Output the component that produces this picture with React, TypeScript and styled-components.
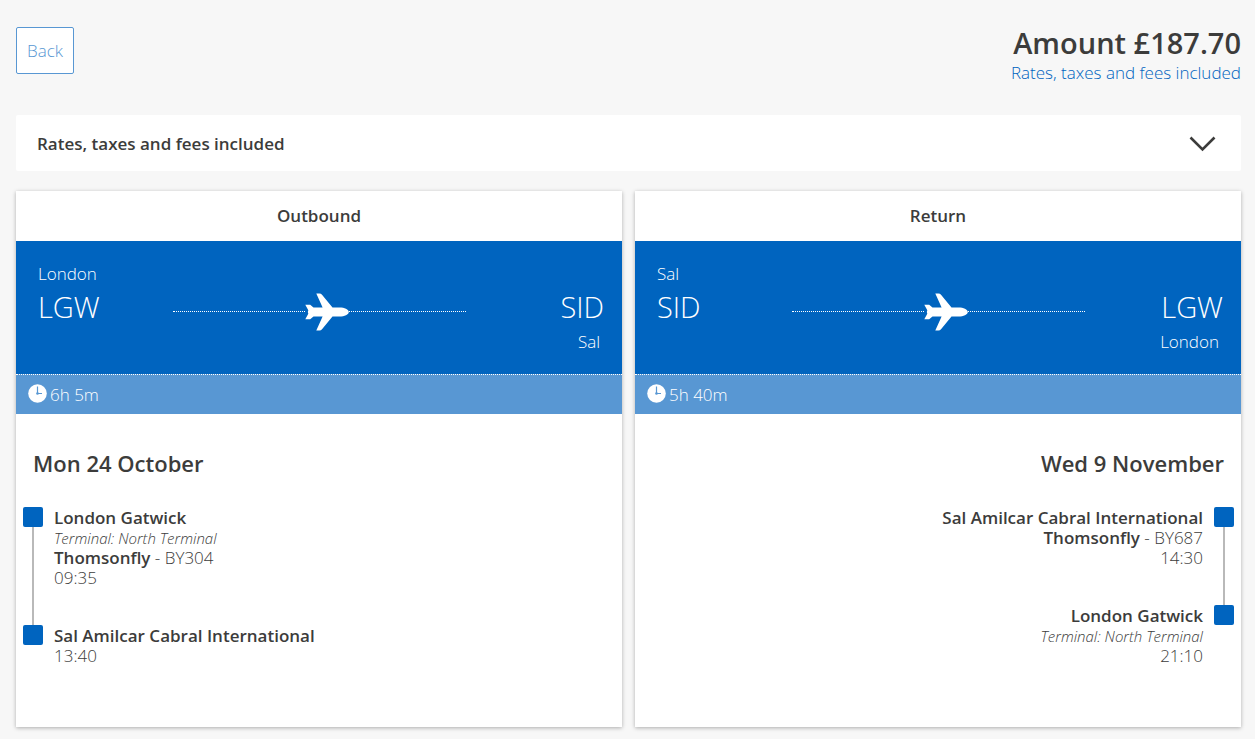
import React from "react";
import styled, { createGlobalStyle } from "styled-components";

const color = {
  page: "#f7f7f7",
  text: "#3c3c3b",
  blue: "#0064bf",
  lightBlue: "#5897d3",
  rail: "#b9b9b9",
};

const weight = { light: 340, strong: 600 };

const GlobalStyle = createGlobalStyle`
  *, *::before, *::after { box-sizing: border-box; }
  body {
    margin: 0;
    background: ${color.page};
    color: ${color.text};
    font-family: "Open Sans", "Noto Sans", sans-serif;
    font-size: 17px;
    font-weight: ${weight.light};
    line-height: 20px;
  }
  button { font: inherit; color: inherit; cursor: pointer; }
`;

const Page = styled.main`
  padding: 27px 14px 12px 16px;
`;

const Header = styled.header`
  display: flex;
  justify-content: space-between;
  align-items: flex-start;
  min-height: 88px;
`;

const BackButton = styled.button`
  height: 47px;
  padding: 0 10px;
  border: 1px solid ${color.lightBlue};
  border-radius: 2px;
  background: #fff;
  color: ${color.lightBlue};
`;

const Total = styled.div`
  text-align: right;
`;

const Amount = styled.h1`
  margin: 0 0 4px;
  font-size: 29px;
  font-weight: ${weight.strong};
  line-height: 32px;
`;

const RatesLink = styled.a`
  color: ${color.blue};
  text-decoration: none;
`;

const RatesToggle = styled.button`
  display: flex;
  justify-content: space-between;
  align-items: center;
  width: 100%;
  height: 56px;
  margin-bottom: 20px;
  padding: 2px 25px 0 21px;
  border: 0;
  border-radius: 2px;
  background: #fff;
  text-align: left;
`;

const Strong = styled.strong`
  font-weight: ${weight.strong};
`;

const Flights = styled.div`
  display: grid;
  grid-template-columns: 1fr 1fr;
  gap: 13px;
`;

const Card = styled.section`
  display: flex;
  flex-direction: column;
  background: #fff;
  box-shadow: 0 1px 4px rgba(0, 0, 0, 0.3);
`;

const CardTitle = styled.h2`
  margin: 0;
  font-size: 17px;
  font-weight: ${weight.strong};
  line-height: 50px;
  text-align: center;
`;

const Route = styled.div`
  display: grid;
  grid-template-columns: 135px 1fr 138px;
  padding: 16px 18px 15px 22px;
  background: ${color.blue};
  color: #fff;
`;

const Place = styled.div<{ $end?: boolean }>`
  display: flex;
  flex-direction: column;
  padding-top: ${(p) => (p.$end ? "34px" : "0")};
  padding-bottom: ${(p) => (p.$end ? "0" : "34px")};
  text-align: ${(p) => (p.$end ? "right" : "left")};
`;

const City = styled.span<{ $end?: boolean }>`
  padding-right: ${(p) => (p.$end ? "4px" : "0")};
  line-height: 34px;
`;

const Code = styled.span`
  padding-bottom: 2px;
  font-size: 29px;
  line-height: 32px;
`;

const Path = styled.div`
  display: flex;
  align-items: center;
  padding-top: 7px;
`;

const Dots = styled.span<{ $share: number }>`
  flex: ${(p) => p.$share};
  border-top: 1px dotted #fff;
`;

const Duration = styled.div`
  display: flex;
  align-items: center;
  gap: 3px;
  height: 40px;
  padding: 0 12px;
  border-top: 1px dotted #fff;
  background: ${color.lightBlue};
  color: #fff;

  svg {
    margin-bottom: 2px;
  }
`;

const Details = styled.div<{ $end?: boolean }>`
  flex: 1;
  padding: 35px 7px 61px;
  text-align: ${(p) => (p.$end ? "right" : "left")};
`;

const DateHeading = styled.h3`
  margin: 0 10px 30px;
  font-size: 22px;
  font-weight: ${weight.strong};
  line-height: 28px;
`;

const Stops = styled.ol`
  margin: 0;
  padding: 0;
  list-style: none;
`;

const Stop = styled.li<{ $end?: boolean }>`
  display: flex;
  flex-direction: ${(p) => (p.$end ? "row-reverse" : "row")};
  gap: 11px;
`;

const Rail = styled.span`
  display: flex;
  flex-direction: column;
  align-items: center;
  width: 20px;

  &::before {
    content: "";
    width: 20px;
    height: 20px;
    border-radius: 2px;
    background: ${color.blue};
  }

  li:not(:last-child) > &::after {
    content: "";
    flex: 1;
    width: 2px;
    background: ${color.rail};
  }
`;

const StopText = styled.div`
  display: flex;
  flex-direction: column;
  padding-top: 1px;

  li:not(:last-child) > & {
    padding-bottom: 37px;
  }
`;

const Terminal = styled.em`
  font-size: 15px;
`;

function Chevron() {
  return (
    <svg width="27" height="17" viewBox="0 0 27 17" aria-hidden="true">
      <path d="M1.5 1.5 L13.5 13.5 L25.5 1.5" fill="none" stroke={color.text} strokeWidth="2.6" />
    </svg>
  );
}

function Plane() {
  return (
    <svg width="44" height="38" viewBox="0 0 44 38" fill="#fff" aria-hidden="true">
      <path d="M11.3 0.5 H14.5 Q16 0.5 17 1.7 L27.5 14.5 H34.5 C39.5 14.5 43.8 16.3 43.8 19 C43.8 21.7 39.5 23.5 34.5 23.5 H27.5 L17 36.3 Q16 37.5 14.5 37.5 H11.3 L17.6 23.5 H8.5 L5.2 26.3 H0.3 L3.3 20.8 L2.8 19 L3.3 17.2 L0.3 11.7 H5.2 L8.5 14.5 H17.6 Z" />
    </svg>
  );
}

function Clock() {
  return (
    <svg width="19" height="19" viewBox="0 0 19 19" aria-hidden="true">
      <circle cx="9.5" cy="9.5" r="9.3" fill="#fff" />
      <path d="M9.5 2.5 V9.5 H14" fill="none" stroke={color.lightBlue} strokeWidth="1.2" />
      <circle cx="9.5" cy="9.5" r="1.3" fill={color.lightBlue} />
    </svg>
  );
}

interface StopInfo {
  airport: string;
  terminal?: string;
  flight?: string;
  time: string;
}

interface FlightProps {
  title: string;
  from: [string, string];
  to: [string, string];
  duration: string;
  date: string;
  stops: StopInfo[];
  end?: boolean;
}

function Flight({ title, from, to, duration, date, stops, end }: FlightProps) {
  return (
    <Card>
      <CardTitle>{title}</CardTitle>
      <Route>
        <Place>
          <City>{from[0]}</City>
          <Code>{from[1]}</Code>
        </Place>
        <Path>
          <Dots $share={9} />
          <Plane />
          <Dots $share={8} />
        </Path>
        <Place $end>
          <Code>{to[1]}</Code>
          <City $end>{to[0]}</City>
        </Place>
      </Route>
      <Duration>
        <Clock />
        {duration}
      </Duration>
      <Details $end={end}>
        <DateHeading>{date}</DateHeading>
        <Stops>
          {stops.map((stop) => (
            <Stop key={stop.airport} $end={end}>
              <Rail />
              <StopText>
                <Strong>{stop.airport}</Strong>
                {stop.terminal && <Terminal>Terminal: {stop.terminal}</Terminal>}
                {stop.flight && (
                  <span>
                    <Strong>Thomsonfly</Strong> - {stop.flight}
                  </span>
                )}
                <time>{stop.time}</time>
              </StopText>
            </Stop>
          ))}
        </Stops>
      </Details>
    </Card>
  );
}

export default function App() {
  return (
    <>
      <GlobalStyle />
      <Page>
        <Header>
          <BackButton type="button">Back</BackButton>
          <Total>
            <Amount>Amount £187.70</Amount>
            <RatesLink href="#rates">Rates, taxes and fees included</RatesLink>
          </Total>
        </Header>
        <RatesToggle id="rates" type="button" aria-expanded="false">
          <Strong>Rates, taxes and fees included</Strong>
          <Chevron />
        </RatesToggle>
        <Flights>
          <Flight
            title="Outbound"
            from={["London", "LGW"]}
            to={["Sal", "SID"]}
            duration="6h 5m"
            date="Mon 24 October"
            stops={[
              { airport: "London Gatwick", terminal: "North Terminal", flight: "BY304", time: "09:35" },
              { airport: "Sal Amilcar Cabral International", time: "13:40" },
            ]}
          />
          <Flight
            end
            title="Return"
            from={["Sal", "SID"]}
            to={["London", "LGW"]}
            duration="5h 40m"
            date="Wed 9 November"
            stops={[
              { airport: "Sal Amilcar Cabral International", flight: "BY687", time: "14:30" },
              { airport: "London Gatwick", terminal: "North Terminal", time: "21:10" },
            ]}
          />
        </Flights>
      </Page>
    </>
  );
}
